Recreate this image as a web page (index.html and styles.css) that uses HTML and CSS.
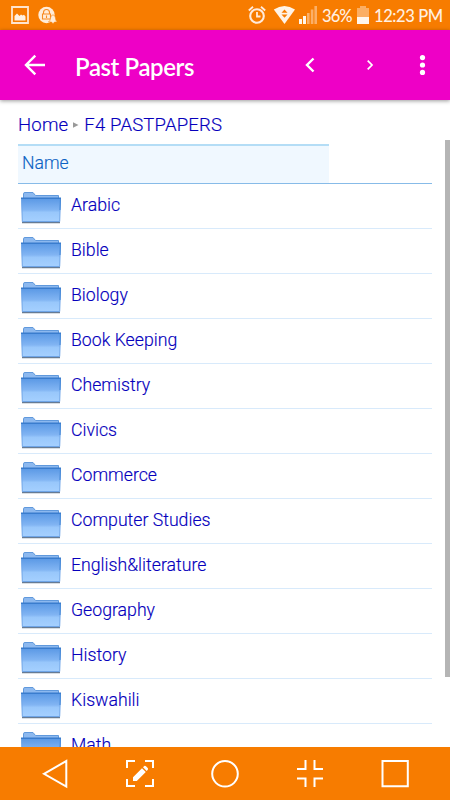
FILE: index.html
```
<!DOCTYPE html>
<html lang="en">
<head>
	<meta charset="utf-8">
	<meta name="viewport" content="width=device-width, initial-scale=1">
	<title>Past Papers</title>
	<link rel="stylesheet" href="styles.css">
</head>
<body>
	<!-- shared folder icon -->
	<svg class="defs" width="0" height="0">
		<linearGradient id="front" x1="0" y1="0" x2="0" y2="1">
			<stop offset="0" stop-color="#5b99e5"/>
			<stop offset=".5" stop-color="#82b5f3"/>
			<stop offset=".6" stop-color="#98c7fb"/>
			<stop offset="1" stop-color="#a5d0ff"/>
		</linearGradient>
		<symbol id="folder" viewBox="0 0 42 34">
			<path d="M3.5 9V2.8Q3.5 1.5 5 1.5H13L15.5 4.5H38.5V9Z" fill="#8db9ef" stroke="#6099dc"/>
			<path d="M2 31.4H40" stroke="#667b94" stroke-width="1.6"/>
			<path d="M1.5 7.5H40.5L39.7 30.5H2.3Z" fill="url(#front)" stroke="#6ea5e8"/>
			<path d="M1 7.3H41" stroke="#3a7dce" stroke-width="1.4"/>
			<path d="M40.4 8L40 19" stroke="#4186d6"/>
		</symbol>
	</svg>

	<div class="status">
		<svg class="status-left" width="60" height="30" viewBox="0 0 60 30" fill="none">
			<path d="M12 7H28V23H12Z" stroke="#ffe5cf" stroke-width="1.8"/>
			<path d="M14.5 20.5V16L17 13.5L19.5 16L21 14.5L22.5 15.5L24 14.8L25.5 16.5V20.5Z" fill="#fff0e2"/>
			<circle cx="46.5" cy="15" r="8.2" fill="#ffecd9"/>
			<path d="M43.5 14V12.5A3 3 0 0 1 49.5 12.5V14M42.5 14H50.5V19H42.5ZM46.5 15.5V18" stroke="#f78a22" stroke-width="1.1"/>
			<path d="M48.5 22Q50.5 20.5 50.5 18Q50.5 15.5 53 14.8Q55.5 15.5 55.5 18Q55.5 20.5 57.2 22H54.5L53 23.8L51.5 22Z" fill="#ffecd9" stroke="#f77f08" stroke-width=".6"/>
		</svg>
		<svg class="status-right" width="75" height="30" viewBox="245 0 75 30" fill="none">
			<circle cx="257" cy="16" r="6.8" stroke="#ffeadb" stroke-width="2.1"/>
			<path d="M248.8 10.5L253 6.8M261 6.8L265.2 10.5M257 12V16.5H260.5" stroke="#ffeadb" stroke-width="1.8"/>
			<path d="M273.8 9.5Q284.5 2.5 295 9.5L284.5 24Z" fill="#fff3e6"/>
			<path d="M281.5 12.8L284.5 9.5L287.5 12.8ZM281.5 14.5H287.5L284.5 17.8Z" fill="#f77c00"/>
			<path d="M299 19H302V24H299ZM303 16H306V24H303Z" fill="#fff5ea"/>
			<path d="M307 13H309.6V24H307ZM310.8 9.5H313.4V24H310.8ZM314.4 6H317V24H314.4Z" fill="#fbaf67"/>
		</svg>
		<span class="percent">36%</span>
		<svg class="battery" width="12" height="18" viewBox="0 0 12 18">
			<path d="M0 2H3V0H9V2H12V18H0Z" fill="#fbae63"/>
			<path d="M0 11H12V18H0Z" fill="#fff6ed"/>
		</svg>
		<span class="clock">12:23 PM</span>
	</div>

	<div class="appbar">
		<svg class="back" width="22" height="22" viewBox="0 0 22 22" fill="none" stroke="#fff" stroke-width="2.4">
			<path d="M21 11H3M11.3 1.7L2 11L11.3 20.3"/>
		</svg>
		<h1 class="title">Past Papers</h1>
		<svg class="actions" width="130" height="30" viewBox="300 50 130 30" fill="none" stroke="#fff">
			<path d="M313.5 58.5L307 65L313.5 71.5" stroke-width="2.4"/>
			<path d="M367.7 60.7L372 65L367.7 69.3" stroke-width="1.7"/>
			<g fill="#fff" stroke="none">
				<circle cx="422.5" cy="57.6" r="2.6"/>
				<circle cx="422.5" cy="65" r="2.6"/>
				<circle cx="422.5" cy="72.4" r="2.6"/>
			</g>
		</svg>
	</div>

	<div class="content">
		<div class="page">
			<div class="crumbs"><a class="home">Home</a><svg class="sep" width="6" height="6" viewBox="0 0 6 6"><path d="M0 0.3L5.5 3L0 5.7Z" fill="#999"/></svg><a class="current">F4 PASTPAPERS</a></div>
			<div class="head"><div class="name">Name</div></div>
			<div class="row"><svg class="folder"><use href="#folder"/></svg><a>Arabic</a></div>
			<div class="row"><svg class="folder"><use href="#folder"/></svg><a>Bible</a></div>
			<div class="row"><svg class="folder"><use href="#folder"/></svg><a>Biology</a></div>
			<div class="row"><svg class="folder"><use href="#folder"/></svg><a>Book Keeping</a></div>
			<div class="row"><svg class="folder"><use href="#folder"/></svg><a>Chemistry</a></div>
			<div class="row"><svg class="folder"><use href="#folder"/></svg><a>Civics</a></div>
			<div class="row"><svg class="folder"><use href="#folder"/></svg><a>Commerce</a></div>
			<div class="row"><svg class="folder"><use href="#folder"/></svg><a>Computer Studies</a></div>
			<div class="row"><svg class="folder"><use href="#folder"/></svg><a>English&amp;literature</a></div>
			<div class="row"><svg class="folder"><use href="#folder"/></svg><a>Geography</a></div>
			<div class="row"><svg class="folder"><use href="#folder"/></svg><a>History</a></div>
			<div class="row"><svg class="folder"><use href="#folder"/></svg><a>Kiswahili</a></div>
			<div class="row"><svg class="folder"><use href="#folder"/></svg><a>Math</a></div>
		</div>
		<div class="scrollbar"></div>
	</div>

	<div class="navbar">
		<svg width="450" height="53" viewBox="0 747 450 53" fill="none" stroke="#fff" stroke-width="2">
			<path d="M44 773.8L66.3 761V786.5Z"/>
			<path d="M127 768V761H135M145 761H153V768M153 779V786H145M135 786H127V779"/>
			<path d="M133 781V777.2L142 768.2L145.8 772L136.8 781ZM143 767.2L144.3 766Q145.2 765.5 146 766.3L147.7 768Q148.4 768.8 147.8 769.7L146.7 770.9Z" fill="#fff" stroke="none"/>
			<circle cx="225" cy="773.8" r="12.8"/>
			<path d="M305.5 760V769H297M314.5 760V769H323M305.5 787V778.5H297M314.5 787V778.5H323"/>
			<path d="M382.5 761H407.8V786.3H382.5Z"/>
		</svg>
	</div>
</body>
</html>
```
FILE: styles.css
```
body {
	margin: 0;
	height: 800px;
	display: flex;
	flex-direction: column;
	overflow: hidden;
	background-color: #fff;
	font-family: Roboto, "Liberation Sans", sans-serif;
}
svg {
	display: block;
	flex: none;
}
.defs {
	position: absolute;
}
.status {
	display: flex;
	align-items: center;
	flex: none;
	height: 30px;
	background-color: #f77c00;
	color: #fff0e2;
	font-family: Lato, sans-serif;
	font-size: 16.5px;
	font-weight: 500;
	line-height: 30px;
	white-space: nowrap;
}
.status-right {
	margin-left: 185px;
}
.percent {
	width: 37px;
	padding-top: 2px;
	margin-left: 2px;
	letter-spacing: -0.9px;
}
.battery {
	margin-left: -2px;
}
.clock {
	padding-top: 2px;
	margin-left: 5px;
	letter-spacing: -0.4px;
}
.appbar {
	display: flex;
	align-items: center;
	flex: none;
	height: 70px;
	background-color: #ee00c6;
	box-shadow: 0 1px 4px rgba(0, 0, 0, 0.4);
	z-index: 1;
}
.back {
	margin-left: 24px;
}
.title {
	width: 225px;
	margin: 0 0 0 29px;
	padding-top: 3px;
	color: #fff;
	font-family: Lato, sans-serif;
	font-size: 24px;
	font-weight: 600;
	line-height: 30px;
	letter-spacing: -0.4px;
}
.content {
	display: flex;
	justify-content: space-between;
	height: 647px;
	overflow: hidden;
}
.page {
	width: 414px;
	margin-left: 18px;
	font-size: 18.6px;
	font-weight: 300;
	color: #0600bc;
	-webkit-text-stroke: 0.15px;
}
.crumbs {
	display: flex;
	align-items: center;
	box-sizing: border-box;
	height: 44px;
	padding-top: 5px;
	line-height: 38px;
}
.crumbs a {
	letter-spacing: 0.15px;
}
.sep {
	margin: 0 5px 0 5px;
}
.head {
	height: 39px;
	border-bottom: 1px solid #87bbe8;
}
.name {
	box-sizing: border-box;
	width: 311px;
	height: 39px;
	padding-left: 4px;
	border-top: 2px solid #b4ddf6;
	background-color: #f0f8ff;
	color: #0b62c4;
	font-size: 17.6px;
	line-height: 35px;
}
.row {
	display: flex;
	box-sizing: border-box;
	height: 45px;
	padding-left: 2px;
	border-bottom: 1px solid #d8eafb;
}
.row a {
	margin-left: 9px;
	font-size: 17.7px;
	line-height: 42px;
}
.folder {
	width: 42px;
	height: 34px;
	margin-top: 7px;
}
.scrollbar {
	width: 5px;
	height: 537px;
	margin-top: 40px;
	background-color: #b5b5b5;
}
.navbar {
	flex: none;
	height: 53px;
	background-color: #f77c00;
}
```
